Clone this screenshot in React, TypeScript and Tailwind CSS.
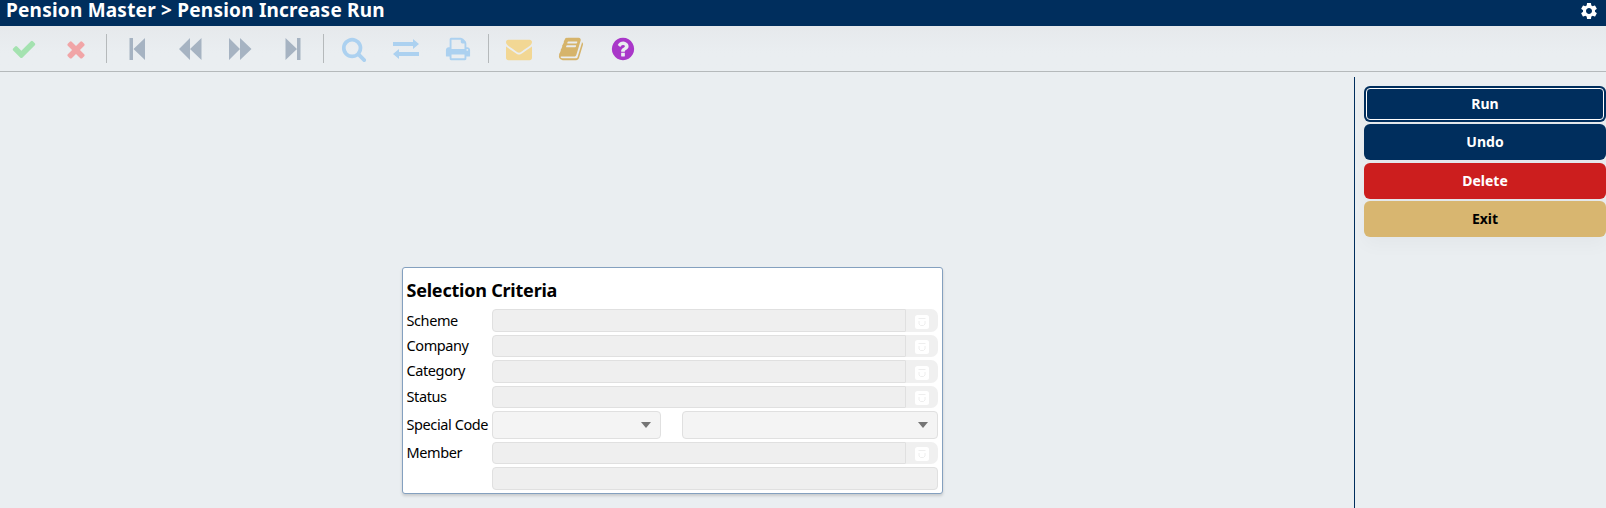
import React from "react";
import { MdSettings } from "react-icons/md";

const FONT = "font-['Noto_Sans','Open_Sans',sans-serif]";

const paths = {
  check: "M1671 566q0 40-28 68l-724 724-136 136q-28 28-68 28t-68-28l-136-136-362-362q-28-28-28-68t28-68l136-136q28-28 68-28t68 28l294 295 656-657q28-28 68-28t68 28l136 136q28 28 28 68z",
  times: "M1490 1322q0 40-28 68l-136 136q-28 28-68 28t-68-28l-294-294-294 294q-28 28-68 28t-68-28l-136-136q-28-28-28-68t28-68l294-294-294-294q-28-28-28-68t28-68l136-136q28-28 68-28t68 28l294 294 294-294q28-28 68-28t68 28l136 136q28 28 28 68t-28 68l-294 294 294 294q28 28 28 68z",
  search: "M1216 832q0-185-131.5-316.5t-316.5-131.5-316.5 131.5-131.5 316.5 131.5 316.5 316.5 131.5 316.5-131.5 131.5-316.5zm512 832q0 52-38 90t-90 38q-54 0-90-38l-343-342q-179 124-399 124-143 0-273.5-55.5t-225-150-150-225-55.5-273.5 55.5-273.5 150-225 225-150 273.5-55.5 273.5 55.5 225 150 150 225 55.5 273.5q0 220-124 399l343 343q37 37 37 90z",
  print: "M448 1536h896v-256h-896v256zm0-640h896v-384h-160q-40 0-68-28t-28-68v-160h-640v640zm1152 64q0-26-19-45t-45-19-45 19-19 45 19 45 45 19 45-19 19-45zm128 0v416q0 13-9.5 22.5t-22.5 9.5h-224v160q0 40-28 68t-68 28h-960q-40 0-68-28t-28-68v-160h-224q-13 0-22.5-9.5t-9.5-22.5v-416q0-79 56.5-135.5t135.5-56.5h64v-544q0-40 28-68t68-28h672q40 0 88 20t76 48l152 152q28 28 48 76t20 88v256h64q79 0 135.5 56.5t56.5 135.5z",
  envelope: "M1792 710v794q0 66-47 113t-113 47h-1472q-66 0-113-47t-47-113v-794q44 49 101 87 362 246 497 345 57 42 92.5 65.5t94.5 48 110 24.5h2q51 0 110-24.5t94.5-48 92.5-65.5q170-123 498-345 57-39 100-87zm0-294q0 79-49 151t-122 123q-376 261-468 325-10 7-42.5 31t-54 38.5-52 32.5-57.5 27-50 9h-2q-23 0-50-9t-57.5-27-52-32.5-54-38.5-42.5-31q-91-64-262-182.5t-205-142.5q-62-42-117-115.5t-55-136.5q0-78 41.5-130t118.5-52h1472q65 0 112.5 47t47.5 113z",
  book: "M1703 478q40 57 18 129l-275 906q-19 64-76.5 107.5t-122.5 43.5h-923q-77 0-148.5-53.5t-99.5-131.5q-24-67-2-127 0-4 3-27t4-37q1-8-3-21.5t-3-19.5q2-11 8-21t16.5-23.5 16.5-23.5q23-38 45-91.5t30-91.5q3-10 .5-30t-.5-28q3-11 17-28t17-23q21-36 42-92t25-90q1-9-2.5-32t.5-28q4-13 22-30.5t22-22.5q19-26 42.5-84.5t27.5-96.5q1-8-3-25.5t-2-26.5q2-8 9-18t18-23 17-21q8-12 16.5-30.5t15-35 16-36 19.5-32 26.5-23.5 36-11.5 47.5 5.5l-1 3q38-9 51-9h761q74 0 114 56t18 130l-274 906q-36 119-71.5 153.5t-128.5 34.5h-869q-27 0-38 15-11 16-1 43 24 70 144 70h923q29 0 56-15.5t35-41.5l300-987q7-22 5-57 38 15 59 43zm-1064 2q-4 13 2 22.5t20 9.5h608q13 0 25.5-9.5t16.5-22.5l21-64q4-13-2-22.5t-20-9.5h-608q-13 0-25.5 9.5t-16.5 22.5zm-83 256q-4 13 2 22.5t20 9.5h608q13 0 25.5-9.5t16.5-22.5l21-64q4-13-2-22.5t-20-9.5h-608q-13 0-25.5 9.5t-16.5 22.5z",
  question: "M1024 1376v-192q0-14-9-23t-23-9h-192q-14 0-23 9t-9 23v192q0 14 9 23t23 9h192q14 0 23-9t9-23zm256-672q0-88-55.5-163t-138.5-116-170-41q-243 0-371 213-15 24 8 42l132 100q7 6 19 6 16 0 25-12 53-68 86-92 34-24 86-24 48 0 85.5 26t37.5 59q0 38-20 61t-68 45q-63 28-115.5 86.5t-52.5 125.5v36q0 14 9 23t23 9h192q14 0 23-9t9-23q0-19 21.5-49.5t54.5-49.5q32-18 49-28.5t46-35 44.5-48 28-60.5 12.5-81zm384 192q0 209-103 385.5t-279.5 279.5-385.5 103-385.5-103-279.5-279.5-103-385.5 103-385.5 279.5-279.5 385.5-103 385.5 103 279.5 279.5 103 385.5z",
};

function Glyph({ d, className }: { d: string; className: string }) {
  return (
    <svg viewBox="0 0 1792 1792" className={`shrink-0 ${className}`} fill="currentColor">
      <path d={d} />
    </svg>
  );
}

function Arrow({ d, className }: { d: string; className: string }) {
  return (
    <svg viewBox="0 0 24 24" className={`size-6 shrink-0 text-[#a6b3c2] ${className}`} fill="currentColor">
      <path d={d} />
    </svg>
  );
}

function Divider({ className }: { className: string }) {
  return <div className={`h-[29px] w-px shrink-0 bg-[#b5b9bb] ${className}`} />;
}

function Toolbar() {
  return (
    <div className="flex h-[46px] shrink-0 items-center border-b border-[#b5b9bb] bg-linear-to-b from-[#e6e9ec] to-[#eaeef1] to-60%">
      <Glyph d={paths.check} className="ml-[11px] size-[26px] text-[#a4e2b0]" />
      <Glyph d={paths.times} className="ml-[26px] size-[26px] text-[#f1a5a7]" />
      <Divider className="ml-[17px]" />
      <Arrow d="M1.500 1H5v22H1.500zM17 1v22L5.500 12z" className="ml-[21px]" />
      <Arrow d="M12 1v22L1 12zM23.500 1v22L12 12z" className="ml-[26px]" />
      <Arrow d="M1 1v22l11-11zM12 1v22l11.500-11z" className="ml-[26px]" />
      <Arrow d="M1.500 1v22L13 12zM13 1h3.500v22H13z" className="ml-[32px]" />
      <Divider className="ml-[15px]" />
      <Glyph d={paths.search} className="ml-[17px] size-[26px] text-[#acd1f0]" />
      <svg viewBox="0 0 26 20" className="ml-[26px] h-5 w-[26px] shrink-0" fill="#acd1f0">
        <path d="M0 3h20V0l6 5-6 5V7H0zM26 13H6v-3l-6 5 6 5v-3h20z" />
      </svg>
      <Glyph d={paths.print} className="ml-[26px] size-[26px] text-[#acd1f0]" />
      <Divider className="ml-[17px]" />
      <Glyph d={paths.envelope} className="ml-[17px] size-[26px] text-[#f2d794]" />
      <Glyph d={paths.book} className="ml-[26px] size-[26px] text-[#d6b46b]" />
      <Glyph d={paths.question} className="ml-[26px] size-[26px] text-[#a937c9]" />
    </div>
  );
}

function LookupField({ label, height, labelPad = "" }: { label: string; height: string; labelPad?: string }) {
  return (
    <div className={`flex ${height}`}>
      <label className={`w-[85.5px] shrink-0 text-[14.5px] leading-[21px] tracking-[-0.4px] ${labelPad}`}>{label}</label>
      <div className="w-[414px] shrink-0 rounded-l-[4px] border border-[#e0e0e0] bg-[#efefef]" />
      <div className="flex w-[32px] items-center justify-center rounded-r-[7px] bg-[#f0f0f0] pt-[2px]">
        <svg viewBox="0 0 14 14" className="size-[14px]">
          <rect width="14" height="14" rx="2.500" fill="#fff" />
          <path d="M3.500 3.500h7" fill="none" stroke="#eeeeee" />
          <path d="M4 6v3l1.500 1.500h3L10 9V6" fill="none" stroke="#eeeeee" />
        </svg>
      </div>
    </div>
  );
}

function SelectBox({ className }: { className: string }) {
  return (
    <div className={`flex h-7 items-center justify-end rounded-[4px] border border-[#e0e0e0] bg-[#f4f4f4] pr-[9.5px] ${className}`}>
      <svg viewBox="0 0 10 6" className="h-[6px] w-[10px]">
        <path d="M0 0h10L5 6z" fill="#757575" />
      </svg>
    </div>
  );
}

function SelectionPanel() {
  return (
    <section className="flex h-[227px] w-[541px] flex-col rounded-[3px] border border-[#84a0bf] bg-white pl-[3.5px] shadow-[0_2px_3px_rgba(0,0,0,0.15)]">
      <h2 className="h-[41px] pt-[9px] text-[18px] leading-[26px] font-bold tracking-[-0.22px] whitespace-nowrap">Selection Criteria</h2>
      <div className="flex flex-col gap-[3px]">
        <LookupField label="Scheme" height="h-[23px]" labelPad="pt-px" />
        <LookupField label="Company" height="h-[22px]" />
        <LookupField label="Category" height="h-[23px]" />
        <LookupField label="Status" height="h-[22px]" />
        <div className="flex">
          <label className="w-[85.5px] shrink-0 pt-[3px] text-[14.5px] leading-[20px] tracking-[-0.4px] whitespace-nowrap">Special Code</label>
          <SelectBox className="w-[169px]" />
          <SelectBox className="ml-[21px] w-[256px]" />
        </div>
        <LookupField label="Member" height="h-[22px]" />
        <div className="ml-[85.5px] h-[23px] w-[446px] rounded-[4px] border border-[#e0e0e0] bg-[#efefef]" />
      </div>
    </section>
  );
}

function Sidebar() {
  const base = "h-9 w-full rounded-[6px] text-[14px] font-bold leading-[20px] shadow-[0_8px_18px_rgba(0,0,0,0.03)]";
  return (
    <aside className="mt-[5px] flex w-[252px] shrink-0 flex-col border-l border-[#002e5d] pt-[9px] pl-[9px]">
      <button className={`${base} bg-[#002e5d] p-[2px] text-white`}>
        <span className="flex size-full items-center justify-center rounded-[4px] border border-white">Run</span>
      </button>
      <button className={`${base} mt-[2px] bg-[#002e5d] text-white`}>Undo</button>
      <button className={`${base} mt-[3px] bg-[#cc1e1e] text-white`}>Delete</button>
      <button className={`${base} mt-[2px] bg-[#d8b670] text-black`}>Exit</button>
    </aside>
  );
}

export default function App() {
  return (
    <div className={`flex h-[508px] w-[1606px] flex-col overflow-hidden bg-[#eaeef1] text-black ${FONT}`}>
      <header className="flex h-[26px] shrink-0 items-start justify-between bg-[#002e5d] pr-[7px] pl-[6px] text-white">
        <h1 className="text-[19px] leading-[20px] font-bold tracking-[0.22px] whitespace-nowrap">Pension Master &gt; Pension Increase Run</h1>
        <MdSettings className="mt-px size-5" />
      </header>
      <Toolbar />
      <div className="flex min-h-0 flex-1">
        <main className="flex-1 pt-[195px] pl-[402px]">
          <SelectionPanel />
        </main>
        <Sidebar />
      </div>
    </div>
  );
}
